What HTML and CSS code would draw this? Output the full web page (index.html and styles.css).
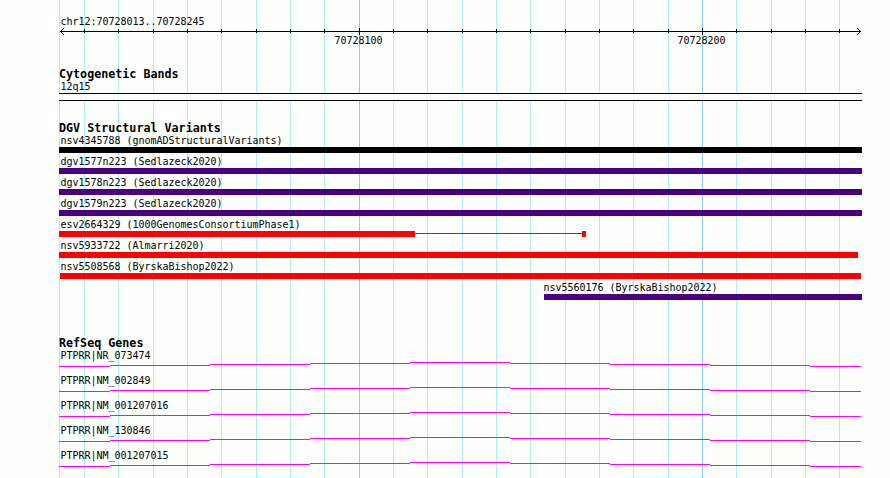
FILE: index.html
```html
<!DOCTYPE html>
<html lang="en">
<head>
  <meta charset="UTF-8" />
  <title>chr12:70728013..70728245</title>
  <link rel="stylesheet" href="styles.css">
</head>
<body>
  <svg class="grid" width="890" height="478" shape-rendering="crispEdges">
    <path class="grid-minor" d="M59.5 0v478M84.5 0v478M118.5 0v478M153.5 0v478M187.5 0v478M221.5 0v478M256.5 0v478M290.5 0v478M324.5 0v478M393.5 0v478M427.5 0v478M462.5 0v478M496.5 0v478M530.5 0v478M565.5 0v478M599.5 0v478M633.5 0v478M668.5 0v478M736.5 0v478M771.5 0v478M805.5 0v478M839.5 0v478" />
    <path class="grid-major" d="M359.5 0v478M702.5 0v478" />
  </svg>

  <!-- intron line shared by every gene row -->
  <svg class="defs" width="0" height="0">
    <symbol id="intron" viewBox="0 0 803 5">
      <path class="intron" d="M0 4.5h51M51 3.5h100M151 2.5h100M251 1.5h100M351 .5h100M451 1.5h100M551 2.5h100M651 3.5h100M751 4.5h51" />
    </symbol>
  </svg>

  <main class="browser">
    <section class="track">
      <div class="label">chr12:70728013..70728245</div>
      <svg class="ruler" width="803" height="19" shape-rendering="crispEdges">
        <path d="M1 3.5h801M25.5 1v4M59.5 1v4M94.5 1v4M128.5 1v4M162.5 1v4M197.5 1v4M231.5 1v4M265.5 1v4M300.5 0v7M334.5 1v4M368.5 1v4M403.5 1v4M437.5 1v4M471.5 1v4M506.5 1v4M540.5 1v4M574.5 1v4M609.5 1v4M643.5 0v7M677.5 1v4M712.5 1v4M746.5 1v4M780.5 1v4" />
        <path d="M4.5 0v1M3.5 1v1M2.5 2v1M2.5 4v1M3.5 5v1M4.5 6v1M798.5 0v1M799.5 1v1M800.5 2v1M800.5 4v1M799.5 5v1M798.5 6v1" />
        <text x="275.5" y="16">70728100</text>
        <text x="618.5" y="16">70728200</text>
      </svg>
    </section>

    <section class="track">
      <h2>Cytogenetic Bands</h2>
      <div class="label">12q15</div>
      <div class="band"></div>
    </section>

    <section class="track variants">
      <h2>DGV Structural Variants</h2>
      <div class="row">
        <div class="label">nsv4345788 (gnomADStructuralVariants)</div>
        <div class="bar black"></div>
      </div>
      <div class="row">
        <div class="label">dgv1577n223 (Sedlazeck2020)</div>
        <div class="bar purple"></div>
      </div>
      <div class="row">
        <div class="label">dgv1578n223 (Sedlazeck2020)</div>
        <div class="bar purple"></div>
      </div>
      <div class="row">
        <div class="label">dgv1579n223 (Sedlazeck2020)</div>
        <div class="bar purple"></div>
      </div>
      <div class="row">
        <div class="label">esv2664329 (1000GenomesConsortiumPhase1)</div>
        <div class="segments">
          <div class="bar red" style="width: 356px"></div>
          <div class="link" style="width: 167px"></div>
          <div class="bar red" style="width: 4px"></div>
        </div>
      </div>
      <div class="row">
        <div class="label">nsv5933722 (Almarri2020)</div>
        <div class="bar red" style="width: 799px"></div>
      </div>
      <div class="row">
        <div class="label">nsv5508568 (ByrskaBishop2022)</div>
        <div class="bar red" style="width: 801px; margin-left: 1px"></div>
      </div>
      <div class="row" style="margin-left: 485px">
        <div class="label flush">nsv5560176 (ByrskaBishop2022)</div>
        <div class="bar purple"></div>
      </div>
    </section>

    <section class="track genes">
      <h2>RefSeq Genes</h2>
      <div class="row">
        <div class="label">PTPRR|NR_073474</div>
        <svg class="gene" width="803" height="5"><use href="#intron" /></svg>
      </div>
      <div class="row">
        <div class="label">PTPRR|NM_002849</div>
        <svg class="gene" width="803" height="5"><use href="#intron" /></svg>
      </div>
      <div class="row">
        <div class="label">PTPRR|NM_001207016</div>
        <svg class="gene" width="803" height="5"><use href="#intron" /></svg>
      </div>
      <div class="row">
        <div class="label">PTPRR|NM_130846</div>
        <svg class="gene" width="803" height="5"><use href="#intron" /></svg>
      </div>
      <div class="row">
        <div class="label">PTPRR|NM_001207015</div>
        <svg class="gene" width="803" height="5"><use href="#intron" /></svg>
      </div>
    </section>
  </main>
</body>
</html>
```
FILE: styles.css
```css
body {
  margin: 0;
  height: 478px;
  overflow: hidden;
  position: relative;
  background: #fdfffc;
  color: #000;
  font-family: "DejaVu Sans Mono", "Liberation Mono", monospace;
  font-size: 10px;
  line-height: 12px;
}

svg {
  display: block;
}

/* vertical guide lines behind all tracks */
.grid {
  position: absolute;
  top: 0;
  left: 0;
  z-index: -1;
}

.grid-minor {
  stroke: #afeeee;
}

.grid-major {
  stroke: #87ceeb;
}

.defs {
  position: absolute;
}

.browser {
  width: 803px;
  padding: 16px 0 0 59px;
  display: flex;
  flex-direction: column;
  gap: 20px;
}

h2 {
  margin: 0;
  font-size: 11.7px;
  line-height: 14px;
  font-weight: bold;
}

.label {
  height: 12px;
  padding-left: 1.5px;
  letter-spacing: -0.02px;
  white-space: nowrap;
}

.label.flush {
  padding-left: 0;
  margin-left: -0.5px;
}

.ruler path {
  stroke: #000;
}

.ruler text {
  letter-spacing: -0.02px;
}

.band {
  height: 6px;
  border-top: 1px solid #000;
  border-bottom: 1px solid #000;
  background: #fdfffc;
}

.variants .row {
  margin-bottom: 3px;
}

.bar {
  height: 6px;
}

.black {
  background: #000;
}

.purple {
  background: #4b0082;
}

.red {
  background: #f00;
}

.segments {
  display: flex;
}

.link {
  height: 1px;
  margin-top: 2px;
  background: #f00;
}

.genes {
  margin-top: 13px;
}

.genes .row {
  margin-bottom: 8px;
}

.intron {
  stroke: #f0f;
  shape-rendering: crispEdges;
}
```
